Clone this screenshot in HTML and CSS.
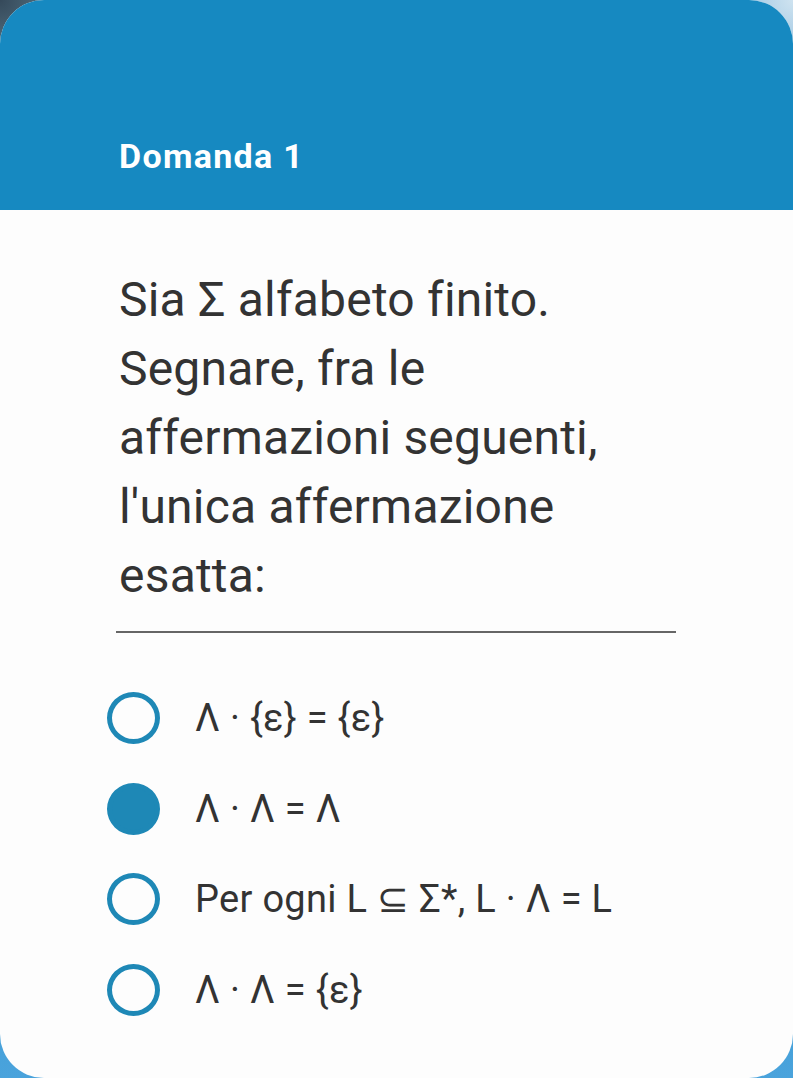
FILE: index.html
```html
<!DOCTYPE html>
<html lang="it">
<head>
<meta charset="utf-8">
<title>Domanda 1</title>
<link rel="stylesheet" href="styles.css">
</head>
<body>
<div class="card">
  <header class="card-head">
    <h1 class="title">Domanda 1</h1>
  </header>
  <main class="card-body">
    <p class="question">Sia Σ alfabeto finito. Segnare, fra le affermazioni seguenti, l'unica affermazione esatta:</p>
    <hr class="divider">
    <ul class="options">
      <li class="option"><span class="radio"></span><span class="label">Λ · {ε} = {ε}</span></li>
      <li class="option"><span class="radio checked"></span><span class="label">Λ · Λ = Λ</span></li>
      <li class="option"><span class="radio"></span><span class="label">Per ogni L ⊆ Σ*, L · Λ = L</span></li>
      <li class="option"><span class="radio"></span><span class="label">Λ · Λ = {ε}</span></li>
    </ul>
  </main>
</div>
</body>
</html>
```
FILE: styles.css
```css
html, body {
  margin: 0;
  padding: 0;
  height: 100%;
}
body {
  background:
    radial-gradient(circle at 0 0, #35495a 0, #4d6878 40px, transparent 60px),
    radial-gradient(circle at 100% 0, #cfe3f0 0, #a9cde6 40px, transparent 60px),
    linear-gradient(#1689c1, #1689c1 50%, #4aa3dc);
  font-family: Roboto, "Noto Sans", sans-serif;
  overflow: hidden;
}
.card {
  width: 793px;
  height: 1078px;
  border-radius: 44px;
  overflow: hidden;
  background: #fdfdfd;
  display: flex;
  flex-direction: column;
}
.card-head {
  background: #1689c1;
  height: 210px;
  flex: none;
  display: flex;
  align-items: flex-end;
  padding: 0 0 0 119px;
  box-sizing: border-box;
}
.title {
  margin: 0 0 34px 0;
  color: #fff;
  font-size: 34px;
  font-weight: 700;
  line-height: 40px;
  letter-spacing: 1.3px;
}
.card-body {
  padding: 55px 117px 0 119px;
}
.question {
  margin: 0;
  font-size: 48px;
  line-height: 69px;
  letter-spacing: 0.2px;
  color: #333;
}
.divider {
  border: 0;
  height: 2px;
  background: #666;
  margin: 21px 0 0 -3px;
}
.options {
  list-style: none;
  margin: 0;
  padding: 59px 0 0 0;
  display: flex;
  flex-direction: column;
  gap: 38.5px;
}
.option {
  display: flex;
  align-items: center;
  height: 52px;
}
.radio {
  width: 53px;
  height: 52px;
  box-sizing: border-box;
  border: 5px solid #1e88b6;
  border-radius: 50%;
  margin-left: -12px;
  margin-right: 35px;
  flex: none;
}
.radio.checked {
  background: #1e88b6;
}
.label {
  font-size: 38px;
  letter-spacing: 0.3px;
  color: #333;
  white-space: nowrap;
}
```
